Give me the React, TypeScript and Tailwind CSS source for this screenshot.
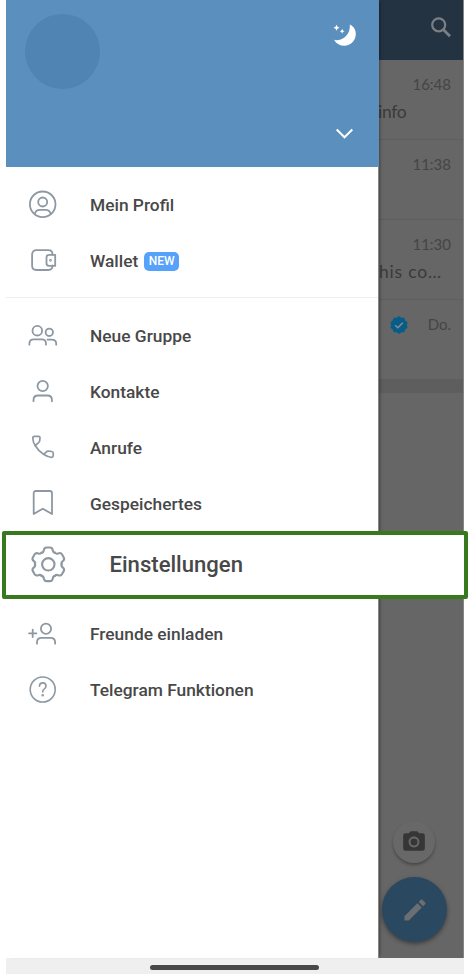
import React from 'react';

interface MenuRowProps {
  label: string;
  icon: React.ReactNode;
  badge?: string;
}

const MenuIcon = ({ children, width = 1.8 }: { children: React.ReactNode; width?: number }) => (
  <svg
    className="w-8 h-8 shrink-0 text-[#8d98a2]"
    viewBox="0 0 32 32"
    fill="none"
    stroke="currentColor"
    strokeWidth={width}
    strokeLinecap="round"
    strokeLinejoin="round"
  >
    {children}
  </svg>
);

const MenuRow: React.FC<MenuRowProps> = ({ label, icon, badge }) => (
  <div className="h-14 pl-5 flex items-center">
    {icon}
    <span className="ml-8 pt-px text-[17.35px] leading-none font-medium text-[#484848] whitespace-nowrap">{label}</span>
    {badge && (
      <span className="ml-1.5 h-[19px] w-[35px] rounded-[5px] bg-[#56a2fb] text-white text-[12px] font-medium flex items-center justify-center">
        {badge}
      </span>
    )}
  </div>
);

const ProfileIcon = () => (
  <MenuIcon>
    <circle cx="16.7" cy="15.3" r="12.8" />
    <circle cx="16.7" cy="13" r="4.5" />
    <path d="M8.8 24.6c.8-2.4 2.4-3.8 4.8-3.8h6.2c2.4 0 4 1.4 4.8 3.8" />
  </MenuIcon>
);

const WalletIcon = () => (
  <MenuIcon>
    <path d="M26.500 9.700v-.3c0-2.500-1.600-4.200-4.200-4.200H10.400c-2.600 0-4.300 1.700-4.300 4.200v11.400c0 2.600 1.700 4.200 4.300 4.200h11.900c2.600 0 4.200-1.700 4.200-4.200v-.3" />
    <path d="M23 9.800h6.200v11H23c-1.500 0-2.500-1-2.500-2.500v-6c0-1.500 1-2.500 2.500-2.500z" />
    <circle cx="24.5" cy="15.3" r=".5" />
  </MenuIcon>
);

const GroupIcon = () => (
  <MenuIcon>
    <circle cx="11.3" cy="10.7" r="4.8" />
    <path d="M3.400 24.700v-1c0-2.700 1.700-4.300 4.400-4.300h7.800c2.700 0 4.400 1.600 4.400 4.300v1" />
    <circle cx="23.3" cy="12.3" r="3.7" />
    <path d="M21.500 19.600h4.200c2.800 0 4.500 1.600 4.500 4.200v.9" />
  </MenuIcon>
);

const ContactIcon = () => (
  <MenuIcon>
    <circle cx="16.7" cy="10" r="5.2" />
    <path d="M7.500 25.200v-1.300c0-2.700 1.700-4.400 4.600-4.400h9.200c2.900 0 4.600 1.700 4.600 4.400v1.300" />
  </MenuIcon>
);

const PhoneIcon = () => (
  <MenuIcon width={1.7}>
    <path d="M9.300 13.700C7.700 11.200 6.800 8.400 6.800 6c0-1.100.7-1.700 1.700-1.700h4c1 0 1.600.7 1.500 1.700l-.3 2.700c-.1.800-.4 1.300-1.100 1.900z" />
    <path d="M9.300 13.700C11.400 17.200 14 19.900 17.500 22.300c2.700 1.800 5.700 2.900 8.100 3 1 0 1.600-.6 1.600-1.600v-2.500c0-1-.5-1.600-1.500-1.700l-3.300-.4c-.9-.1-1.400.1-2 .8l-2.600 2.400" />
  </MenuIcon>
);

const BookmarkIcon = () => (
  <MenuIcon>
    <path d="M7.700 26V5.200c0-1.400.8-2.200 2.200-2.200h13.900c1.400 0 2.200.8 2.200 2.200V26l-9.200-5.300z" />
  </MenuIcon>
);

const InviteIcon = () => (
  <MenuIcon>
    <path d="M3 15.300h7.400M6.700 11.600v7.400" />
    <circle cx="20" cy="10.7" r="5.1" />
    <path d="M11 25.700v-1.400c0-2.800 1.700-4.500 4.600-4.500h8.900c2.900 0 4.600 1.700 4.600 4.500v1.400" />
  </MenuIcon>
);

const HelpIcon = () => (
  <MenuIcon width={1.6}>
    <circle cx="16.7" cy="15.5" r="12.5" />
    <path d="M13.500 12.300c0-2 1.300-3.400 3.300-3.400s3.200 1.300 3.200 3.100c0 1.500-.8 2.200-1.800 3-1 .8-1.500 1.300-1.500 2.600v.3" />
    <circle cx="16.7" cy="21.3" r=".5" fill="currentColor" />
  </MenuIcon>
);

const GearIcon = () => (
  <svg
    className="w-10 h-10 text-[#8d98a2]"
    viewBox="-20.3 -19.3 40 40"
    fill="none"
    stroke="currentColor"
    strokeWidth="2.1"
    strokeLinecap="round"
  >
    <circle r="6.2" />
    {[0, 60, 120, 180, 240, 300].map((angle) => (
      <path
        key={angle}
        transform={`rotate(${angle})`}
        d="M-6.700-11.600C-5.300-11.700-4.700-12.600-4.500-14c.3-1.900 1.100-2.800 2.700-2.800h3.600c1.600 0 2.400.9 2.700 2.800C4.700-12.600 5.300-11.700 6.700-11.600"
      />
    ))}
  </svg>
);

interface ChatRowProps {
  time: string;
  text?: React.ReactNode;
  verified?: boolean;
}

const ChatRow: React.FC<ChatRowProps> = ({ time, text, verified }) => (
  <div className="h-20 pt-3.5 border-b border-[#5e5e5e]">
    <div className="h-5 pr-3 flex items-center justify-end text-[15px] text-[#454545]">
      {verified && (
        <svg className="w-[18px] h-[18px] mt-0.5 mr-5" viewBox="-9 -9 18 18">
          <path
            d="M0-9 2.500-7.300 5.300-7.300 6.300-4.600 8.600-2.800 7.800 0 8.600 2.800 6.300 4.600 5.300 7.300 2.500 7.300 0 9-2.500 7.300-5.300 7.300-6.300 4.600-8.600 2.800-7.800 0-8.600-2.800-6.300-4.600-5.300-7.300-2.500-7.300Z"
            fill="#075d87"
          />
          <path d="M-3.800.3-1.200 2.800 3.800-2.300" fill="none" stroke="#8b8b8b" strokeWidth="1.5" />
        </svg>
      )}
      {time}
    </div>
    <div className="mt-1.5 h-6 text-[17.5px] leading-6 whitespace-nowrap text-[#3a3a3a]">{text}</div>
  </div>
);

const App = () => {
  return (
    <div className="w-[471px] h-[974px] pl-1.5 bg-white overflow-hidden font-['Roboto',sans-serif]">
      <div className="w-[458px] h-[958px] flex">
        {/* Drawer */}
        <aside className="relative z-10 w-[373px] h-full shrink-0 bg-white border-r border-[#858585] shadow-[3px_0_3px_-2px_rgba(0,0,0,0.35)]">
          <div className="h-[167px] w-[373px] bg-[#5b8fbd] pl-[19px] pr-[22px] flex justify-between">
            <div className="mt-3.5 w-[75px] h-[75px] rounded-full bg-[#5084b3]" />
            <div className="pt-[22px] flex flex-col items-center">
              <svg className="w-6 h-6" viewBox="0 0 24 24" fill="white">
                <path d="M16.800 2.500C20.900 4.500 22.800 7.900 22.800 12c0 6.400-5 11.800-11.500 11.800-4.300 0-8-2.100-10.300-6.100 2.300.8 5.500.8 8.700-1.100 5-2.900 7.600-8 7.100-14.100z" />
                <path d="M3.500 2.800 4.500 4.700 6.500 5.700 4.500 6.700 3.500 8.800 2.500 6.700.5 5.700 2.500 4.700zM9.200 6.800l.7 1.700 1.700.7-1.700.8-.7 1.700-.8-1.700-1.600-.8 1.600-.7z" />
              </svg>
              <svg className="mt-[76px] w-6 h-6" viewBox="0 0 24 24" fill="none" stroke="white" strokeWidth="2">
                <path d="M3.700 7.500 11.500 15.300l7.800-7.800" />
              </svg>
            </div>
          </div>

          <nav className="pt-2.5">
            <MenuRow label="Mein Profil" icon={<ProfileIcon />} />
            <MenuRow label="Wallet" icon={<WalletIcon />} badge="NEW" />
            <div className="mt-2 mb-2.5 h-px bg-[#efefef]" />
            <MenuRow label="Neue Gruppe" icon={<GroupIcon />} />
            <MenuRow label="Kontakte" icon={<ContactIcon />} />
            <MenuRow label="Anrufe" icon={<PhoneIcon />} />
            <MenuRow label="Gespeichertes" icon={<BookmarkIcon />} />

            {/* Highlighted entry, wider than the drawer */}
            <div className="relative h-[74px]">
              <div className="absolute -top-px -left-1 w-[466px] h-[68px] rounded-[2px] border-4 border-[#38781f] bg-white flex items-center pl-[22px]">
                <GearIcon />
                <span className="ml-[41.5px] text-[22.1px] font-medium text-[#484848]">Einstellungen</span>
              </div>
            </div>

            <MenuRow label="Freunde einladen" icon={<InviteIcon />} />
            <MenuRow label="Telegram Funktionen" icon={<HelpIcon />} />
          </nav>
        </aside>

        {/* Dimmed chat list */}
        <main className="flex-1 min-w-0 h-full bg-[#666] border-r border-[#858585] flex flex-col font-['Lato',sans-serif]">
          <div className="h-[60px] bg-[#233341] flex justify-end pt-4 pr-2.5">
            <svg className="w-6 h-6" viewBox="0 0 24 24" fill="none" stroke="#7b7f83" strokeWidth="2.2">
              <circle cx="9.7" cy="8.8" r="6.5" />
              <path d="M14 13.300 21 20.200" strokeWidth="2.8" />
            </svg>
          </div>
          <ChatRow time="16:48" text={<span className="-ml-px tracking-[-0.3px]">info</span>} />
          <ChatRow time="11:38" />
          <ChatRow time="11:30" text={<span className="tracking-[0.8px]">his co…</span>} />
          <ChatRow time="Do." verified />
          <div className="h-[13px] bg-[#5e5e5e]" />

          <div className="mt-auto pb-4 pl-[3px] flex flex-col items-start">
            <div className="ml-[11px] w-[42px] h-[42px] rounded-full bg-[#686868] shadow-[0_2px_3px_rgba(0,0,0,0.3)] flex items-center justify-center">
              <svg className="w-[26px] h-[26px]" viewBox="0 0 24 24" fill="#363636">
                <circle cx="12" cy="12" r="3.2" />
                <path d="M9 2 7.170 4H4c-1.100 0-2 .9-2 2v12c0 1.100.9 2 2 2h16c1.100 0 2-.9 2-2V6c0-1.100-.9-2-2-2h-3.170L15 2H9zm3 15c-2.760 0-5-2.240-5-5s2.240-5 5-5 5 2.240 5 5-2.240 5-5 5z" />
              </svg>
            </div>
            <div className="mt-3.5 w-[65px] h-[65px] rounded-full bg-[#2a4961] shadow-[0_2px_4px_rgba(0,0,0,0.4)] flex items-center justify-center">
              <svg className="w-7 h-7" viewBox="0 0 24 24" fill="#6c6f72">
                <path d="M3 17.250V21h3.750L17.810 9.940l-3.750-3.750L3 17.250zM20.710 7.040c.39-.39.39-1.020 0-1.410l-2.340-2.340c-.39-.39-1.020-.39-1.410 0l-1.830 1.830 3.750 3.750 1.830-1.830z" />
              </svg>
            </div>
          </div>
        </main>
      </div>

      {/* Gesture bar */}
      <div className="w-[458px] h-4 bg-[#efefef] pt-[7px] pl-36">
        <div className="w-[169px] h-[5px] rounded-full bg-[#484848]" />
      </div>
    </div>
  );
};

export default App;
